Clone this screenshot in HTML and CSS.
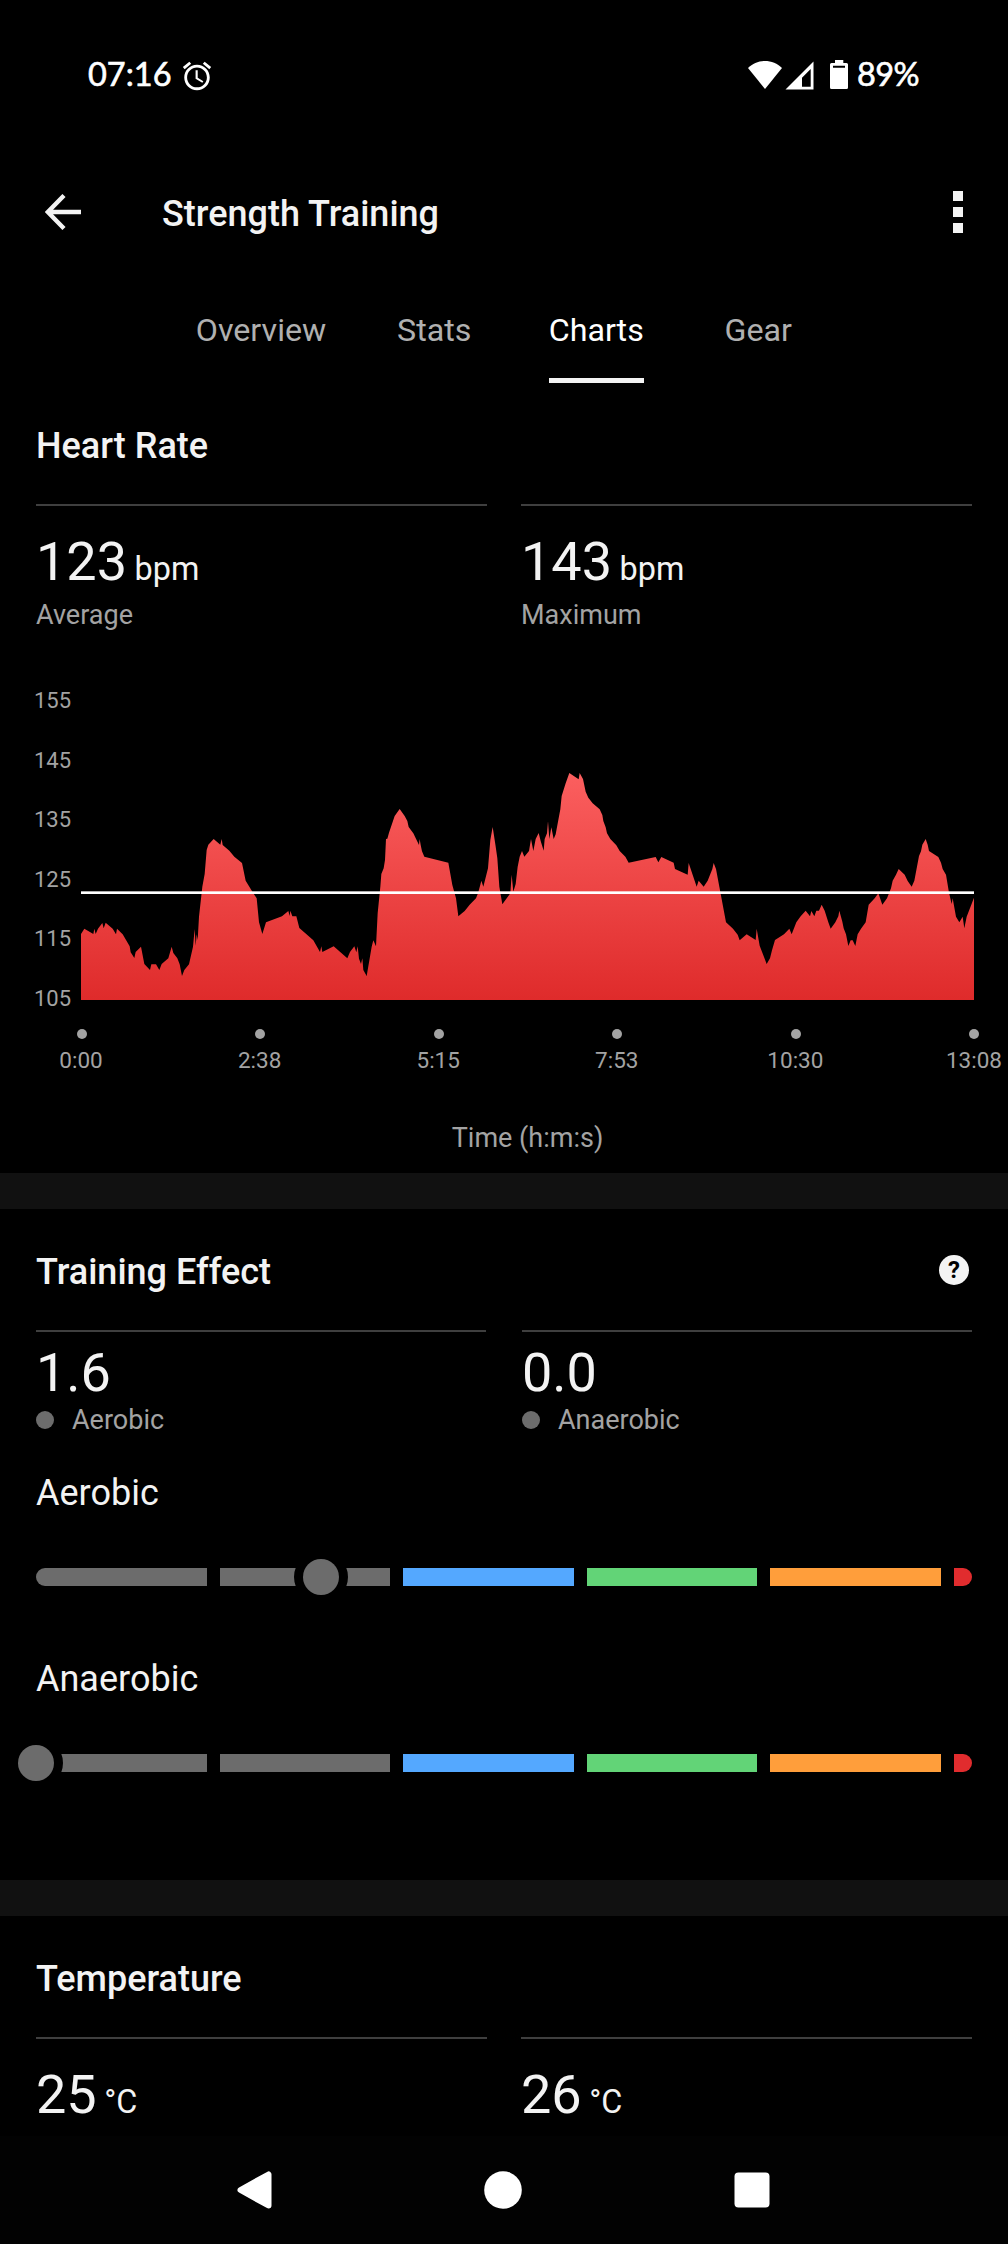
FILE: index.html
```html
<!DOCTYPE html>
<html lang="en">
<head>
  <meta charset="UTF-8" />
  <title>Strength Training</title>
  <link rel="stylesheet" href="styles.css">
</head>
<body>

<div class="status-bar">
  <span class="clock">07:16</span>
  <svg class="alarm" viewBox="0 0 24 24" width="34" height="34"><path fill="#fff" d="M22 5.72l-4.6-3.86-1.29 1.53 4.6 3.86L22 5.72zM7.88 3.39L6.6 1.86 2 5.71l1.29 1.53 4.59-3.85zM12.5 8H11v6l4.75 2.85.75-1.23-4-2.37V8zM12 4c-4.97 0-9 4.03-9 9s4.02 9 9 9c4.97 0 9-4.03 9-9s-4.03-9-9-9zm0 16c-3.87 0-7-3.13-7-7s3.13-7 7-7 7 3.13 7 7-3.13 7-7 7z"/></svg>
  <svg class="signals" viewBox="0 0 100 30" width="100" height="30">
    <path fill="#fff" d="M0 8C9-1.500 25-1.500 34 8L17 29z"/>
    <path fill="#fff" fill-rule="evenodd" d="M65.500 1.500V29.500H37.500zM62.700 9L54 17.800V26.800H62.700z"/>
    <path fill="#fff" fill-rule="evenodd" d="M87 0h8.300v3h3.200q1.500 0 1.500 1.500v23q0 1.500-1.500 1.500h-15q-1.500 0-1.500-1.500v-23q0-1.500 1.500-1.500H87zM85 5.800v2h12v-2z"/>
  </svg>
  <span class="battery">89%</span>
</div>

<header class="app-bar">
  <svg class="back" viewBox="0 0 36 36" width="36" height="36" fill="none" stroke="#f3f3f3" stroke-width="4.400"><path d="M36 18H3M19 1.500L2.800 18L19 34.500"/></svg>
  <h1>Strength Training</h1>
  <div class="menu"><i></i><i></i><i></i></div>
</header>

<nav class="tabs">
  <a><span>Overview</span></a>
  <a><span>Stats</span></a>
  <a class="active"><span>Charts</span></a>
  <a><span>Gear</span></a>
</nav>

<section class="card heart">
  <div class="card-head"><h2>Heart Rate</h2></div>
  <div class="metrics">
    <div class="metric">
      <div class="value">123<small>bpm</small></div>
      <div class="label">Average</div>
    </div>
    <div class="metric">
      <div class="value">143<small>bpm</small></div>
      <div class="label">Maximum</div>
    </div>
  </div>

  <div class="chart">
    <div class="y-axis">
      <span>155</span><span>145</span><span>135</span><span>125</span><span>115</span><span>105</span>
    </div>
    <svg class="plot" viewBox="0 -120 2679 900" width="893" height="300">
      <defs>
        <linearGradient id="hr" gradientUnits="userSpaceOnUse" x1="0" y1="100" x2="0" y2="780">
          <stop offset="0" stop-color="#fb5f5f"/>
          <stop offset="1" stop-color="#df2b2b"/>
        </linearGradient>
      </defs>
      <polygon fill="url(#hr)" points="0,780 0,582 10,566 37,582 40,566 44,582 51,566 64,549 68,565 74,548 95,566 105,583 108,566 125,583 146,619 149,637 160,654 164,636 180,620 190,672 207,690 211,673 225,673 235,690 242,672 262,655 272,620 277,639 289,655 296,673 303,708 310,690 324,673 336,620 341,567 344,617 347,583 350,600 354,530 364,440 371,402 377,330 382,314 398,297 418,314 422,297 425,315 445,332 460,350 483,369 494,422 516,458 527,475 534,547 544,582 555,547 603,529 622,513 626,528 628,512 634,529 646,529 655,564 697,601 717,636 721,619 724,636 758,619 799,655 807,636 820,619 826,637 830,619 834,656 840,672 844,655 847,690 857,708 872,620 877,601 885,619 890,520 898,440 901,402 908,385 912,360 915,297
        919,296 924,278 941,228 956,207 971,228 979,243 983,261 997,280 1014,315 1016,297 1019,315 1023,334 1030,350 1102,368 1114,435 1125,475 1132,529 1151,513 1166,494 1185,475 1191,460 1198,434 1201,422 1207,440 1221,385 1228,300 1235,261 1243,313 1249,355 1255,440 1264,493 1288,460 1292,404 1297,455 1304,432 1310,380 1316,350 1323,333 1330,350 1344,333 1350,297 1357,333 1364,297 1373,279 1379,303 1388,332 1391,297 1398,280 1401,244 1405,297 1411,262 1418,297 1424,283 1438,208 1442,168 1454,130 1465,99 1493,118 1496,99 1506,117 1514,155 1522,173 1535,190 1556,208 1564,225 1567,243 1574,262 1578,280 1588,297 1606,316 1616,333 1633,350 1643,368 1724,351 1732,367 1741,351 1778,368 1782,387 1820,404 1823,369
        1847,440 1853,422 1868,440 1880,422 1894,387 1898,369 1905,387 1915,440 1935,547 1956,566 1970,584 1976,601 1997,583 2024,600 2027,566 2036,617 2057,672 2067,655 2073,631 2082,600 2109,583 2125,566 2132,583 2146,547 2159,529 2174,512 2187,529 2191,513 2200,529 2206,512 2214,512 2222,494 2231,512 2242,547 2249,566 2263,547 2272,529 2275,512 2284,545 2288,565 2295,583 2302,618 2309,601 2315,601 2323,618 2330,583 2340,566 2354,547 2363,494 2381,475 2392,460 2404,494 2418,475 2430,445 2435,422 2445,404 2453,387 2471,404 2480,423 2492,440 2500,422 2514,348 2520,334 2524,314 2534,297 2540,314 2544,333 2572,351 2580,368 2585,387 2595,404 2604,458 2612,492 2615,475 2625,530 2635,547 2645,530 2650,565 2657,530 2679,473 2679,780"/>
      <rect fill="#fff" x="0" y="454" width="2679" height="8"/>
    </svg>
    <div class="x-axis">
      <span>0:00</span><span>2:38</span><span>5:15</span><span>7:53</span><span>10:30</span><span>13:08</span>
    </div>
    <div class="axis-title">Time (h:m:s)</div>
  </div>
</section>

<section class="card effect">
  <div class="card-head">
    <h2>Training Effect</h2>
    <span class="help">?</span>
  </div>
  <div class="metrics">
    <div class="metric">
      <div class="value">1.6</div>
      <div class="label dot">Aerobic</div>
    </div>
    <div class="metric">
      <div class="value">0.0</div>
      <div class="label dot">Anaerobic</div>
    </div>
  </div>
  <div class="gauge">
    <h3>Aerobic</h3>
    <div class="track">
      <i class="grey"></i><i class="grey"></i><i class="blue"></i><i class="green"></i><i class="orange"></i><i class="red"></i>
      <b class="thumb" style="left: 30.5%"></b>
    </div>
  </div>
  <div class="gauge">
    <h3>Anaerobic</h3>
    <div class="track">
      <i class="grey"></i><i class="grey"></i><i class="blue"></i><i class="green"></i><i class="orange"></i><i class="red"></i>
      <b class="thumb" style="left: 0%"></b>
    </div>
  </div>
</section>

<section class="card temperature">
  <div class="card-head"><h2>Temperature</h2></div>
  <div class="metrics">
    <div class="metric"><div class="value">25<small>°C</small></div></div>
    <div class="metric"><div class="value">26<small>°C</small></div></div>
  </div>
</section>

<footer class="nav-bar">
  <svg viewBox="0 0 40 40" width="40" height="40"><path fill="#fff" stroke="#fff" stroke-width="6" stroke-linejoin="round" d="M6.500 20L34.500 4.500V35.500z"/></svg>
  <svg viewBox="0 0 40 40" width="40" height="40"><circle fill="#fff" cx="20" cy="20" r="18.800"/></svg>
  <svg viewBox="0 0 40 40" width="40" height="40"><rect fill="#fff" x="2.500" y="2.500" width="35" height="35" rx="4"/></svg>
</footer>

</body>
</html>
```
FILE: styles.css
```css
* {
  box-sizing: border-box;
}
body {
  margin: 0;
  width: 1008px;
  height: 2244px;
  overflow: hidden;
  background: #000;
  color: #f3f3f3;
  font-family: Roboto, sans-serif;
}
h1, h2, h3 {
  margin: 0;
  font-size: 36px;
  font-weight: 500;
  line-height: 42px;
}
svg {
  display: block;
}

/* status bar */
.status-bar {
  display: flex;
  align-items: center;
  height: 146px;
  padding: 0 89px 0 88px;
  color: #fff;
  font-family: Lato, sans-serif;
  font-size: 32.5px;
  -webkit-text-stroke: 0.6px #fff;
}
.alarm {
  margin-left: 8px;
  margin-top: 5px;
}
.signals {
  margin-left: auto;
  margin-top: 4px;
}
.battery {
  margin-left: 9px;
  letter-spacing: -0.6px;
}

/* app bar */
.app-bar {
  display: flex;
  align-items: center;
  height: 132px;
  padding: 0 45px;
}
.app-bar h1 {
  margin: 3px 0 0 81px;
}
.menu {
  display: flex;
  flex-direction: column;
  gap: 6px;
  margin-left: auto;
}
.menu i {
  width: 10px;
  height: 10px;
  background: #f3f3f3;
}

/* tabs */
.tabs {
  display: flex;
  justify-content: center;
  height: 105px;
}
.tabs a {
  min-width: 162px;
  padding: 0 27px;
  text-align: center;
  font-size: 32.2px;
  color: #b0b0b0;
}
.tabs span {
  display: inline-block;
  height: 105px;
  padding-top: 4px;
  line-height: 96px;
}
.tabs .active span {
  color: #fff;
  border-bottom: 5px solid #f3f3f3;
}

/* cards */
.card {
  padding: 0 36px;
  border-bottom: 36px solid #111;
}
.card-head {
  display: flex;
  justify-content: space-between;
  height: 121px;
  padding-top: 42px;
}
.metrics {
  display: grid;
  grid-template-columns: 1fr 1fr;
  gap: 34px;
}
.metric {
  padding-top: 26px;
  border-top: 2px solid #3f3f3f;
}
.value {
  font-size: 54px;
  line-height: 60px;
}
.value small {
  margin-left: 7.5px;
  font-size: 32.4px;
  line-height: 1;
}
.label {
  margin-top: 7px;
  font-size: 27px;
  line-height: 32px;
  color: #a3a3a3;
}
.heart {
  height: 826px;
}
.effect {
  height: 707px;
}
.temperature {
  height: 220px;
  border-bottom: 0;
}

/* heart rate chart */
.chart {
  display: grid;
  grid-template-columns: 81px 893px;
  margin: 69px -36px 0;
  color: #a3a3a3;
}
.y-axis {
  display: flex;
  flex-direction: column;
  justify-content: space-between;
  height: 322px;
  margin: -11px 10px -11px 0;
  text-align: right;
  font-size: 22px;
  line-height: 24px;
}
.x-axis {
  grid-column: 2;
  display: flex;
  justify-content: space-between;
  margin-top: 29px;
  font-size: 22.5px;
  line-height: 26px;
}
.x-axis span {
  display: flex;
  flex-direction: column;
  align-items: center;
  width: 0;
}
.x-axis span::before {
  content: "";
  width: 10px;
  height: 10px;
  margin: 0 -1px 8px 0;
  border-radius: 50%;
  background: #a3a3a3;
}
.axis-title {
  grid-column: 2;
  margin-top: 49px;
  text-align: center;
  font-size: 27px;
  line-height: 32px;
}

/* training effect */
.help {
  width: 30px;
  height: 30px;
  margin: 4px 3px 0 0;
  border-radius: 50%;
  background: #f3f3f3;
  color: #000;
  text-align: center;
  font-size: 24px;
  font-weight: 700;
  line-height: 31px;
}
.effect .metrics {
  gap: 36px;
  margin-bottom: 36px;
}
.effect .metric {
  padding-top: 11px;
}
.effect .label {
  margin-top: 1px;
}
.dot {
  display: flex;
  align-items: center;
}
.dot::before {
  content: "";
  width: 18px;
  height: 18px;
  margin-right: 18px;
  border-radius: 50%;
  background: #6c6c6c;
}
.gauge {
  margin-bottom: 72px;
}
.gauge h3 {
  font-weight: 400;
}
.track {
  position: relative;
  display: flex;
  gap: 13px;
  height: 18px;
  margin-top: 54px;
}
.track i {
  flex: 1;
}
.track i:first-child {
  border-radius: 9px 0 0 9px;
}
.track .grey { background: #6c6c6c; }
.track .blue { background: #54a8ff; }
.track .green { background: #62d477; }
.track .orange { background: #ff9e3b; }
.track .red {
  flex: none;
  width: 18px;
  border-radius: 0 9px 9px 0;
  background: #e12c2e;
}
.thumb {
  position: absolute;
  top: -9px;
  width: 36px;
  height: 36px;
  margin-left: -18px;
  border-radius: 50%;
  background: #6c6c6c;
  box-shadow: 0 0 0 9px #000;
}

/* system navigation */
.nav-bar {
  display: flex;
  justify-content: center;
  align-items: center;
  gap: 209px;
  height: 108px;
  padding-right: 2px;
  background: #020202;
}
```
